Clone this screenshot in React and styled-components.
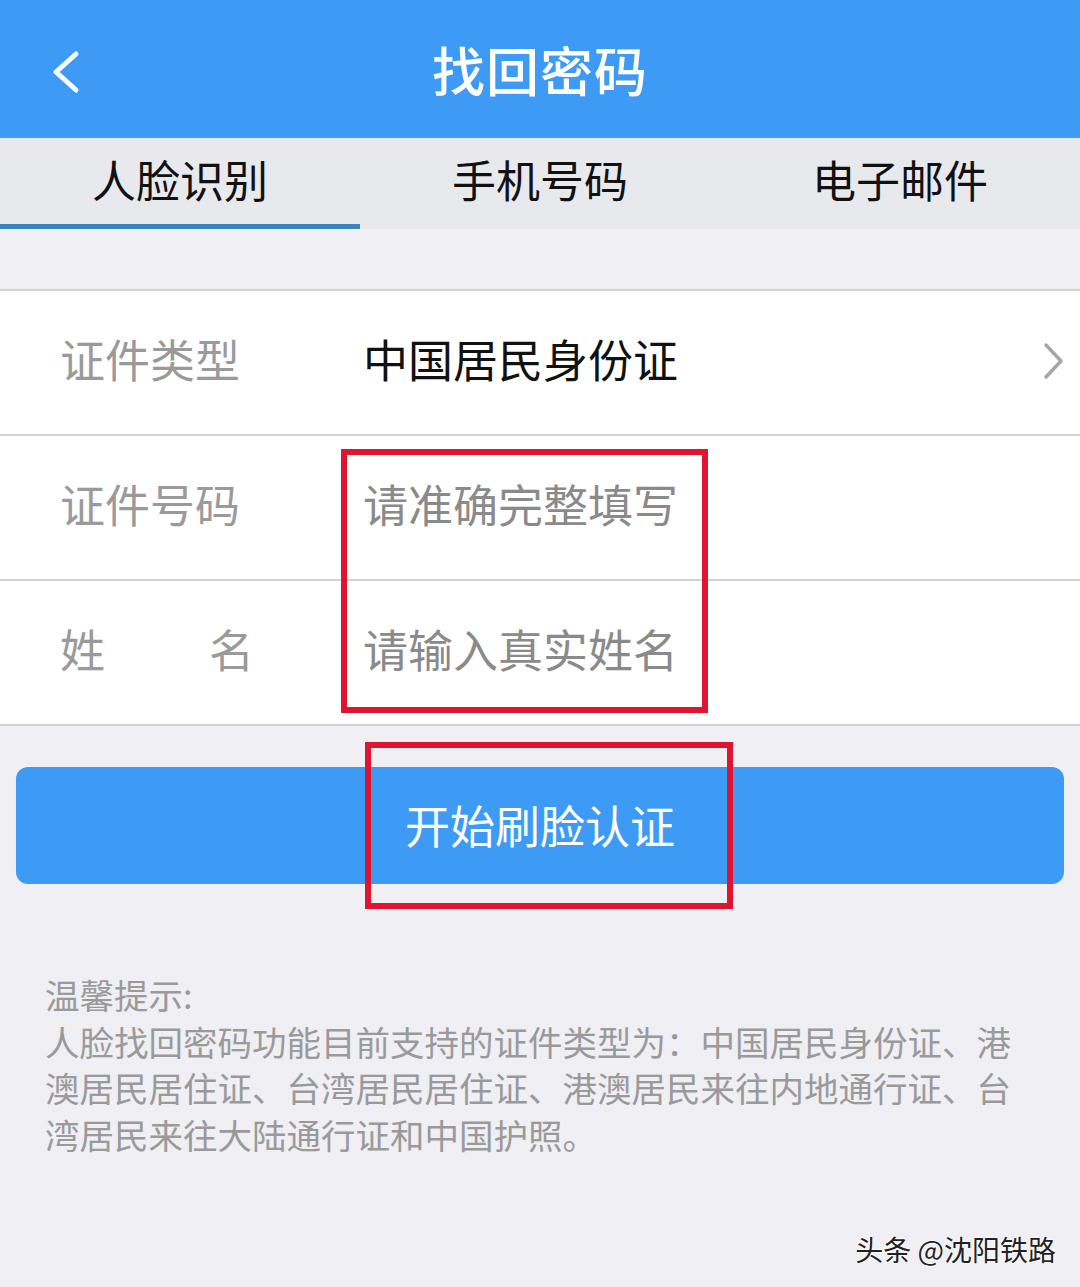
import React, { useState } from 'react';
import styled, { createGlobalStyle } from 'styled-components';

const GlobalStyle = createGlobalStyle`
  html, body {
    margin: 0;
    padding: 0;
    background: #efeff4;
  }
  body {
    font-family: "Noto Sans CJK SC", "Noto Sans", sans-serif;
  }
`;

const tabs = ['人脸识别', '手机号码', '电子邮件'];

const rows = [
  { label: '证件类型', value: '中国居民身份证', filled: true, arrow: true },
  { label: '证件号码', value: '请准确完整填写' },
  { label: '姓名', value: '请输入真实姓名', spread: true },
];

const App = () => {
  const [active, setActive] = useState(0);

  return (
    <Page>
      <GlobalStyle />
      <Header>
        <BackButton aria-label="返回">
          <svg width="34" height="44" viewBox="0 0 34 44">
            <path d="M28 4 L8 22 L28 40" fill="none" stroke="#fff" strokeWidth="5" strokeLinecap="round" strokeLinejoin="round" />
          </svg>
        </BackButton>
        <Title>找回密码</Title>
      </Header>

      <TabBar>
        {tabs.map((t, i) => (
          <Tab key={t} $active={i === active} onClick={() => setActive(i)}>
            {t}
          </Tab>
        ))}
      </TabBar>

      <Form>
        {rows.map((r) => (
          <Row key={r.label}>
            <Label $spread={r.spread}>
              {r.spread ? (
                <>
                  <span>姓</span>
                  <span>名</span>
                </>
              ) : (
                r.label
              )}
            </Label>
            <Value $filled={r.filled}>{r.value}</Value>
            {r.arrow && (
              <Arrow>
                <svg width="24" height="40" viewBox="0 0 24 40">
                  <path d="M4 4 L19 20 L4 36" fill="none" stroke="#a6a6a6" strokeWidth="3.5" strokeLinecap="round" strokeLinejoin="round" />
                </svg>
              </Arrow>
            )}
          </Row>
        ))}
        <Mark $top={158} $left={341} $width={367} $height={264} />
      </Form>

      <ButtonArea>
        <StartButton>开始刷脸认证</StartButton>
        <Mark $top={16} $left={365} $width={368} $height={167} />
      </ButtonArea>

      <Tips>
        <p>温馨提示:</p>
        <p>
          人脸找回密码功能目前支持的证件类型为：中国居民身份证、港澳居民居住证、台湾居民居住证、港澳居民来往内地通行证、台湾居民来往大陆通行证和中国护照。
        </p>
      </Tips>

      <Watermark>头条 @沈阳铁路</Watermark>
    </Page>
  );
};

export default App;

const Page = styled.div`
  position: relative;
  width: 1080px;
  min-height: 1287px;
  background: #efeff4;
`;

const Header = styled.header`
  position: relative;
  height: 138px;
  background: #3e9bf5;
  display: flex;
  align-items: center;
  justify-content: center;
`;

const BackButton = styled.button`
  all: unset;
  position: absolute;
  left: 48px;
  top: 50px;
  display: flex;
  cursor: pointer;
`;

const Title = styled.h1`
  margin: 0;
  font-size: 53px;
  font-weight: 500;
  color: #fff;
  letter-spacing: 1px;
`;

const TabBar = styled.nav`
  display: grid;
  grid-template-columns: repeat(3, 1fr);
  height: 91px;
  background: #e8e9ed;
`;

const Tab = styled.button`
  all: unset;
  display: flex;
  align-items: center;
  justify-content: center;
  padding-bottom: 4px;
  font-size: 44px;
  color: #111;
  cursor: pointer;
  border-bottom: 5px solid ${(p) => (p.$active ? '#3a84bd' : 'transparent')};
`;

const Form = styled.section`
  position: relative;
  margin-top: 60px;
  background: #fff;
  border-top: 2px solid #d2d2d4;
`;

const Row = styled.div`
  display: flex;
  align-items: center;
  box-sizing: border-box;
  height: 145px;
  padding: 0 14px 9px 60px;
  border-bottom: 2px solid #d2d2d4;
`;

const Label = styled.div`
  width: 194px;
  margin-right: 109px;
  display: flex;
  justify-content: ${(p) => (p.$spread ? 'space-between' : 'flex-start')};
  font-size: 45px;
  color: #9a9a9a;
`;

const Value = styled.div`
  flex: 1;
  font-size: 45px;
  color: ${(p) => (p.$filled ? '#111' : '#8a8a8a')};
`;

const Arrow = styled.span`
  display: flex;
  margin-top: 6px;
`;

const Mark = styled.div`
  position: absolute;
  top: ${(p) => p.$top}px;
  left: ${(p) => p.$left}px;
  width: ${(p) => p.$width}px;
  height: ${(p) => p.$height}px;
  box-sizing: border-box;
  border: 6px solid #df1430;
  pointer-events: none;
`;

const ButtonArea = styled.div`
  position: relative;
  padding: 41px 16px 0;
`;

const StartButton = styled.button`
  all: unset;
  box-sizing: border-box;
  display: flex;
  align-items: center;
  justify-content: center;
  width: 100%;
  height: 117px;
  padding-bottom: 3px;
  border-radius: 12px;
  background: #3e9bf5;
  color: #fff;
  font-size: 45px;
  cursor: pointer;
`;

const Tips = styled.div`
  padding: 87px 45px 0;
  width: 990px;
  font-size: 34.5px;
  line-height: 46.7px;
  color: #9a9a9a;

  p {
    margin: 0;
  }
`;

const Watermark = styled.div`
  position: absolute;
  right: 24px;
  bottom: 18px;
  font-size: 28px;
  color: #222;
  text-shadow: 0 0 2px #fff, 0 0 2px #fff, 0 0 3px #fff;
`;
